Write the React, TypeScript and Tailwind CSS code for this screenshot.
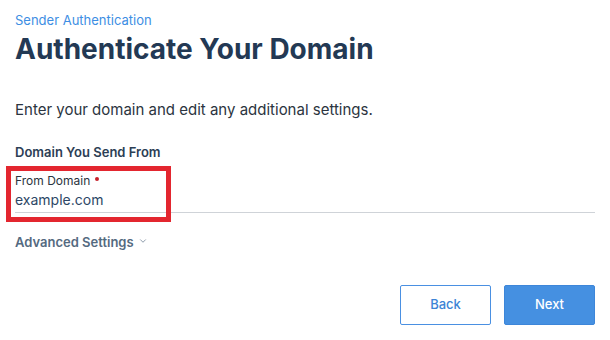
import { ChevronDown } from "lucide-react";

export default function App() {
  return (
    <div
      className="h-[340px] w-[610px] bg-white px-[15px] pt-[12px]"
      style={{ fontFamily: "Inter, 'Noto Sans', sans-serif" }}
    >
      <div className="text-[13px] leading-4 text-[#3d8ee3]">Sender Authentication</div>
      <h1 className="mt-[4px] text-[28px] font-bold leading-[34px] text-[#233954]">
        Authenticate Your Domain
      </h1>

      <p className="mt-[34px] text-[15px] leading-5 text-[#2b3440]">
        Enter your domain and edit any additional settings.
      </p>

      <h2 className="mt-[24px] text-[13px] font-semibold leading-4 text-[#2c3e55]">
        Domain You Send From
      </h2>

      <div className="relative mt-[7px] w-[580px]">
        <div className="pointer-events-none absolute left-[-9px] top-[-1px] h-[56px] w-[165px] border-[5px] border-[#e3262f]" />
        <div className="flex items-center gap-[5px] pt-[6px] text-[12px] leading-4 text-[#2b3440]">
          From Domain
          <span className="mb-[5px] inline-block h-[4px] w-[4px] rounded-full bg-[#c7202a]" />
        </div>
        <div className="mt-[1px] border-b border-[#cfd3d8] pb-[2px] text-[14px] leading-5 text-[#2d4766]">
          example.com
        </div>
      </div>

      <button className="mt-[21px] flex items-center gap-[4px] text-[13px] font-semibold leading-4 text-[#546a80]">
        Advanced Settings
        <ChevronDown className="mb-[2px] h-[10px] w-[10px]" strokeWidth={1.6} />
      </button>

      <div className="mt-[35px] flex w-[580px] justify-end gap-[13px]">
        <button className="h-[40px] w-[91px] rounded-[2px] border border-[#4a90e2] bg-white text-[13px] font-medium text-[#3d84d6]">
          Back
        </button>
        <button className="h-[40px] w-[91px] rounded-[2px] border border-[#3d86d9] bg-[#4590e1] text-[13px] font-medium text-white">
          Next
        </button>
      </div>
    </div>
  );
}
